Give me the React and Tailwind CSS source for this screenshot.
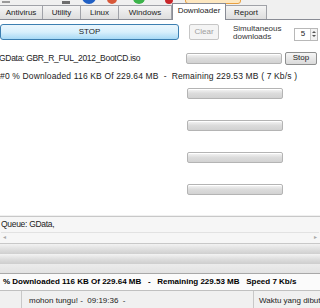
import React from "react";

const tabs = [
  { name: "Antivirus", w: "w-[43px]" },
  { name: "Utility", w: "w-[38px]" },
  { name: "Linux", w: "w-[38px]" },
  { name: "Windows", w: "w-[53px]" },
  { name: "Downloader", w: "w-[54px]", active: true },
  { name: "Report", w: "w-[41px]" },
];

function Bar() {
  return (
    <div className="w-[96px] h-[11px] rounded-[2px] border border-[#b4b4b4] bg-gradient-to-b from-[#f6f6f6] via-[#dcdcdc] to-[#d2d2d2] shadow-[inset_0_1px_0_#ffffff]" />
  );
}

export default function App() {
  return (
    <div className="w-[320px] h-[308px] overflow-hidden flex flex-col bg-[#f0f0f0] text-[#222] text-[8px] font-['Liberation_Sans',Arial,sans-serif]">
      {/* clipped toolbar icons */}
      <div className="h-[4px] flex items-end overflow-hidden shrink-0">
        <div className="ml-[2px] w-[8px] h-[2px] mb-[1px] bg-[#9a9a9a]" />
        <div className="ml-[52px] w-[8px] h-[3px] bg-[#6d6d6d]" />
        <div className="ml-[12px] w-[14px] h-[14px] rounded-full bg-[#1f5fc4]" />
        <div className="ml-[11px] w-[10px] h-[10px] rounded-full bg-[#d8583a]" />
        <div className="ml-[16px] w-[12px] h-[12px] rounded-full bg-[#3bb34a]" />
        <div className="ml-[20px] w-[8px] h-[10px] rounded-full bg-[#c8262a]" />
        <div className="ml-[12px] w-[56px] h-[12px] rounded-[3px] border border-[#e8a040] bg-[#fde7c0]" />
      </div>

      {/* tabs */}
      <div className="h-[16px] flex items-end border-b border-[#898c95] shrink-0">
        {tabs.map((t) =>
          t.active ? (
            <div
              key={t.name}
              className={`${t.w} h-[17px] -mb-px bg-white border border-b-0 border-[#898c95] flex items-center justify-center pb-[2px]`}
            >
              {t.name}
            </div>
          ) : (
            <div
              key={t.name}
              className={`${t.w} h-[14px] border border-b-0 border-l-0 border-[#a0a2a8] bg-gradient-to-b from-[#f4f4f4] to-[#dedede] flex items-center justify-center`}
            >
              {t.name}
            </div>
          )
        )}
      </div>

      {/* tab page */}
      <div className="h-[195px] bg-white flex flex-col shrink-0">
        <div className="mt-[4px] h-[16px] flex items-center">
          <div className="w-[179px] h-[16px] rounded-[3px] border border-[#3c7fb1] bg-gradient-to-b from-[#eaf6fd] via-[#d9f0fc] to-[#a7d9f5] flex items-center justify-center">
            STOP
          </div>
          <div className="ml-[10px] w-[30px] h-[16px] rounded-[2px] border border-[#c6c6c6] bg-[#f4f4f4] text-[#a0a0a0] flex items-center justify-center">
            Clear
          </div>
          <div className="ml-[14px] leading-[8px] text-[#333] mt-[2px]">
            Simultaneous
            <br />
            downloads
          </div>
          <div className="ml-[13px] mt-[4px] w-[24px] h-[13px] border border-[#b8b8b8] flex items-center">
            <span className="flex-1 text-center">5</span>
            <div className="w-[7px] h-full border-l border-[#c8c8c8] flex flex-col items-center justify-center gap-[2px] bg-[#f2f2f2]">
              <div className="w-0 h-0 border-l-[2px] border-r-[2px] border-b-[2px] border-l-transparent border-r-transparent border-b-[#555]" />
              <div className="w-0 h-0 border-l-[2px] border-r-[2px] border-t-[2px] border-l-transparent border-r-transparent border-t-[#555]" />
            </div>
          </div>
        </div>

        <div className="mt-[12px] h-[12px] flex items-center">
          <div className="flex-1 text-[8.5px] tracking-[-0.3px] -ml-[1px]">GData: GBR_R_FUL_2012_BootCD.iso</div>
          <Bar />
          <div className="ml-[3px] mr-[3px] w-[32px] h-[13px] rounded-[2px] border border-[#8e8f8f] bg-gradient-to-b from-[#f6f6f6] to-[#dadada] flex items-center justify-center">
            Stop
          </div>
        </div>
        <div className="mt-[7px] h-[10px] flex items-center text-[8.5px] tracking-[0.15px] whitespace-pre">
          #0 % Downloaded 116 KB Of 229.64 MB  -  Remaining 229.53 MB ( 7 Kb/s )
        </div>

        <div className="mt-[7px] pl-[187px]"><Bar /></div>
        <div className="mt-[21px] pl-[187px]"><Bar /></div>
        <div className="mt-[21px] pl-[187px]"><Bar /></div>
        <div className="mt-[21px] pl-[187px]"><Bar /></div>
      </div>

      {/* queue */}
      <div className="h-[28px] mt-[1px] border-t border-b border-[#c8c8c8] bg-[#f6f6f6] flex flex-col shrink-0">
        <div className="h-[15px] flex items-center pl-[1px] text-[8.5px] tracking-[-0.3px]">Queue: GData,</div>
        <div className="h-[9px] mx-[1px] border-t border-[#e2e2e2] flex items-center justify-between px-[2px] text-[#a8a8a8] text-[6px]">
          <span>◂</span>
          <span>▸</span>
        </div>
      </div>

      {/* splitter bands */}
      <div className="h-[10px] bg-gradient-to-b from-[#f2f2f2] via-[#e0e0e0] to-[#cfcfcf] shrink-0" />
      <div className="h-[10px] bg-gradient-to-b from-[#f4f4f4] via-[#dedede] to-[#cdcdcd] shrink-0" />
      <div className="h-[10px] bg-gradient-to-b from-[#ececec] to-[#e2e2e2] border-b border-[#a8a8a8] shrink-0" />

      {/* status line */}
      <div className="h-[17px] bg-[#fbfbfb] border-b border-[#c0c0c0] flex items-center pl-[3px] font-bold text-[8px] text-black whitespace-pre shrink-0">
        % Downloaded 116 KB Of 229.64 MB   -   Remaining 229.53 MB   Speed 7 Kb/s
      </div>

      {/* status bar */}
      <div className="flex-1 flex items-stretch text-[#222]">
        <div className="w-[22px] border-r border-[#c8c8c8]" />
        <div className="flex-1 pl-[7px] pt-[4px] whitespace-pre">mohon tungu! -  09:19:36  -</div>
        <div className="w-[67px] border-l border-[#c8c8c8] pl-[5px] pt-[4px] whitespace-nowrap overflow-hidden">
          Waktu yang dibutuhkan
        </div>
      </div>
    </div>
  );
}
